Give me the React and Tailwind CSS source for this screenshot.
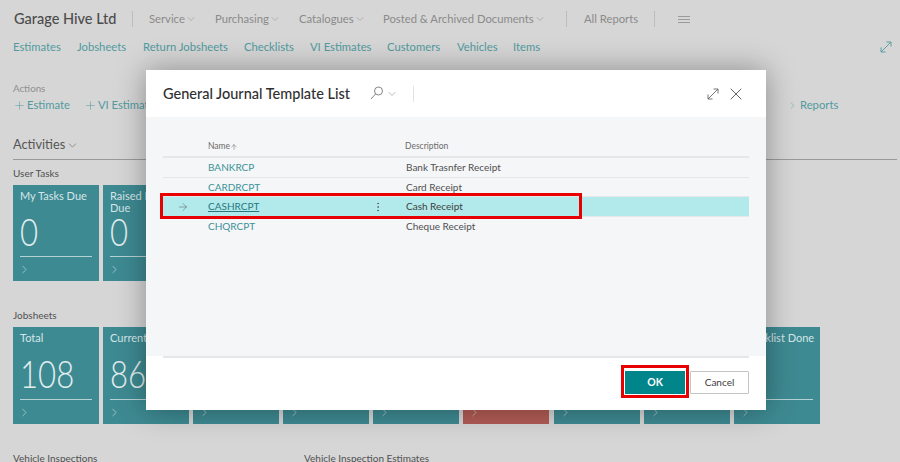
import React from 'react'
import { ChevronDown, ChevronRight, Plus, X, ArrowRight, ArrowUp, EllipsisVertical } from 'lucide-react'

const menus = [
  { name: 'Service', width: 'w-[66px]' },
  { name: 'Purchasing', width: 'w-[84px]' },
  { name: 'Catalogues', width: 'w-[84px]' },
  { name: 'Posted & Archived Documents', width: 'w-[174px]' },
]
const links = [
  { name: 'Estimates', width: 'w-[64px]' },
  { name: 'Jobsheets', width: 'w-[66px]' },
  { name: 'Return Jobsheets', width: 'w-[101px]' },
  { name: 'Checklists', width: 'w-[66px]' },
  { name: 'VI Estimates', width: 'w-[77px]' },
  { name: 'Customers', width: 'w-[70px]' },
  { name: 'Vehicles', width: 'w-[56px]' },
  { name: 'Items', width: 'w-[40px]' },
]
const rows = [
  { name: 'BANKRCP', description: 'Bank Trasnfer Receipt' },
  { name: 'CARDRCPT', description: 'Card Receipt' },
  { name: 'CASHRCPT', description: 'Cash Receipt', selected: true },
  { name: 'CHQRCPT', description: 'Cheque Receipt' },
]
const jobTiles = [
  { label: 'Total', value: '108' },
  { label: 'Current Jobs', value: '86' },
  { label: '' },
  { label: '' },
  { label: '' },
  { label: '', red: true },
  { label: '' },
  { label: '' },
  { label: 'Checklist Done' },
]

const Expand = ({ className }) => (
  <svg className={className} viewBox="0 0 12 12" fill="none" stroke="currentColor" strokeWidth="0.9">
    <path d="M1 11 11 1M6.5 1H11V5.5M1 6.5V11H5.5" />
  </svg>
)

// the search glass in the dialog header has its handle on the left
const SearchGlass = ({ className }) => (
  <svg className={className} viewBox="0 0 14 14" fill="none" stroke="currentColor" strokeWidth="0.9">
    <circle cx="8.5" cy="5" r="4" />
    <path d="M5.6 7.9 1 13" />
  </svg>
)

const Tile = ({ label, value, red, short }) => (
  <div className={`w-[86px] shrink-0 pt-[5px] px-[7px] flex flex-col text-[#d5e6e8] ${short ? 'h-[96px]' : 'h-[97px]'} ${red ? 'bg-[#b25c54]' : 'bg-[#3e8a92]'}`}>
    <div className="text-[11px] leading-[12px] h-[20px] whitespace-pre">{label}</div>
    <div className="h-[44px] pt-[6px]">
      <div className="text-[38px] leading-[30px] font-light text-[#e3eeef] origin-left scale-x-[0.82]">{value}</div>
    </div>
    <div className={`h-px bg-[#b5d2d5] ${short ? 'mt-[2px]' : 'mt-[3px]'}`} />
    <ChevronRight className="w-[13px] h-[13px] mt-[6px] -ml-[2px]" strokeWidth={1.1} />
  </div>
)

export default function App() {
  return (
    <div className="relative w-[900px] h-[462px] overflow-hidden bg-[#d6d6d6] font-['Lato',sans-serif] text-[#505050]">
      {/* Page behind the dialog */}
      <div className="flex items-center h-[37px] pl-[14px] pt-px">
        <div className="text-[14.5px] text-[#4c4c4c] font-medium w-[118px]">Garage Hive Ltd</div>
        <div className="w-px h-[16px] bg-[#bdbdbd] mr-[16px]" />
        {menus.map((m) => (
          <div key={m.name} className={`flex items-center text-[11.25px] text-[#8a8a8a] ${m.width}`}>
            {m.name}
            <ChevronDown className="w-[12px] h-[12px]" strokeWidth={1} />
          </div>
        ))}
        <div className="w-px h-[16px] bg-[#bdbdbd] ml-[9px] mr-[17px]" />
        <div className="text-[11.25px] text-[#8a8a8a] w-[70px] whitespace-nowrap">All Reports</div>
        <div className="w-px h-[16px] bg-[#bdbdbd] mr-[23px]" />
        <div className="flex flex-col gap-[2px] w-[12px]">
          <div className="h-px bg-[#9a9a9a]" />
          <div className="h-px bg-[#9a9a9a]" />
          <div className="h-px bg-[#9a9a9a]" />
        </div>
      </div>

      <div className="flex items-center h-[20px] pl-[13px] pr-[8px] text-[11.25px] text-[#519a9f]">
        {links.map((l) => (
          <div key={l.name} className={l.width}>{l.name}</div>
        ))}
        <Expand className="w-[12px] h-[12px] ml-auto text-[#519a9f]" />
      </div>

      <div className="pl-[13px] mt-[24px] text-[9.75px] leading-[14px] text-[#8f8f8f]">Actions</div>
      <div className="flex items-center h-[20px] pl-[13px] text-[11.25px] text-[#519a9f]">
        <Plus className="w-[13px] h-[13px] mr-px" strokeWidth={1} />
        Estimate
        <Plus className="w-[13px] h-[13px] ml-[14px] mr-px" strokeWidth={1} />
        VI Estimate
        <ChevronRight className="w-[11px] h-[11px] absolute left-[787px]" strokeWidth={1} />
        <span className="absolute left-[800px]">Reports</span>
      </div>

      <div className="flex items-center pl-[13px] mt-[20px] h-[20px] text-[12.75px] text-[#555]">
        Activities
        <ChevronDown className="w-[13px] h-[13px] ml-px" strokeWidth={1} />
      </div>
      <div className="h-px bg-[#9a9a9a] ml-[13px] mr-[3px] mt-[4px]" />

      <div className="pl-[13px] mt-[6px] text-[10px] leading-[14px] h-[19px] text-[#505050]">User Tasks</div>
      <div className="flex gap-[4px] pl-[13px]">
        <Tile label="My Tasks Due" value="0" short />
        <Tile label={'Raised By Me\nDue'} value="0" short />
      </div>

      <div className="pl-[13px] mt-[27px] text-[10px] leading-[14px] h-[19px] text-[#505050]">Jobsheets</div>
      <div className="flex gap-[4.1px] pl-[13px]">
        {jobTiles.map((t, i) => (
          <Tile key={i} {...t} />
        ))}
      </div>

      <div className="flex pl-[13px] mt-[27px] text-[10px] leading-[14px] text-[#505050]">
        <div className="w-[291px]">Vehicle Inspections</div>
        <div>Vehicle Inspection Estimates</div>
      </div>

      {/* Dialog */}
      <div className="absolute left-[146px] top-[70px] w-[620px] h-[340px] flex flex-col bg-white shadow-[0_0_28px_rgba(0,0,0,0.35)]">
        <div className="h-[47px] shrink-0 flex items-center pl-[17px] pr-[20px]">
          <div className="text-[14.5px] text-[#2f2f2f] font-medium w-[207px]">General Journal Template List</div>
          <SearchGlass className="w-[14px] h-[14px] -mt-[2px] text-[#777]" />
          <ChevronDown className="w-[12px] h-[12px] ml-[2px] text-[#777]" strokeWidth={1} />
          <div className="w-px h-[16px] bg-[#e2e2e2] ml-[15px]" />
          <Expand className="w-[12px] h-[12px] ml-auto text-[#666]" />
          <X className="w-[20px] h-[20px] ml-[7px] text-[#444]" strokeWidth={1} />
        </div>

        <div className="h-[239px] shrink-0 bg-[#f5f6f8] px-[17px] pt-[20px]">
          <div className="flex items-center h-[19px] border-b-2 border-[#e6e7e9] box-content text-[8.5px] text-[#6b6b6b]">
            <div className="w-[45px]" />
            <div className="w-[197px] flex items-center">
              Name
              <ArrowUp className="w-[8px] h-[8px]" strokeWidth={1.6} />
            </div>
            <div>Description</div>
          </div>
          {rows.map((r) => (
            <div
              key={r.name}
              className={`flex items-center h-[19.7px] text-[10px] border-b border-[#e6e7e9] last:border-b-0 ${r.selected ? 'bg-[#b2e9eb] text-[#3f3f3f]' : 'text-[#505050]'}`}
            >
              <div className="w-[45px] pl-[14px]">
                {r.selected && <ArrowRight className="w-[12px] h-[12px] text-[#555]" strokeWidth={1} />}
              </div>
              <div className={`w-[164px] ${r.selected ? 'underline text-[#25777d]' : 'text-[#3b9297]'}`}>{r.name}</div>
              <div className="w-[34px]">
                {r.selected && <EllipsisVertical className="w-[12px] h-[12px] text-[#444]" strokeWidth={1.2} />}
              </div>
              <div>{r.description}</div>
            </div>
          ))}
        </div>

        <div className="mx-[17px] h-[2px] bg-[#e6e7e9] shrink-0" />
        <div className="flex-1 flex items-center justify-end pr-[17px] pb-[3px] gap-[5px]">
          <button className="w-[60px] h-[23px] bg-[#00858a] text-white text-[10.5px] font-bold">OK</button>
          <button className="w-[59px] h-[23px] bg-white border border-[#c4c4c4] rounded-[1px] text-[10px] text-[#3b3b3b]">Cancel</button>
        </div>
      </div>

      {/* Red callouts */}
      <div className="absolute left-[160px] top-[193px] w-[422px] h-[26px] border-[3px] border-[#e80000]" />
      <div className="absolute left-[621px] top-[365px] w-[68px] h-[33px] border-[3px] border-[#e80000]" />
    </div>
  )
}
